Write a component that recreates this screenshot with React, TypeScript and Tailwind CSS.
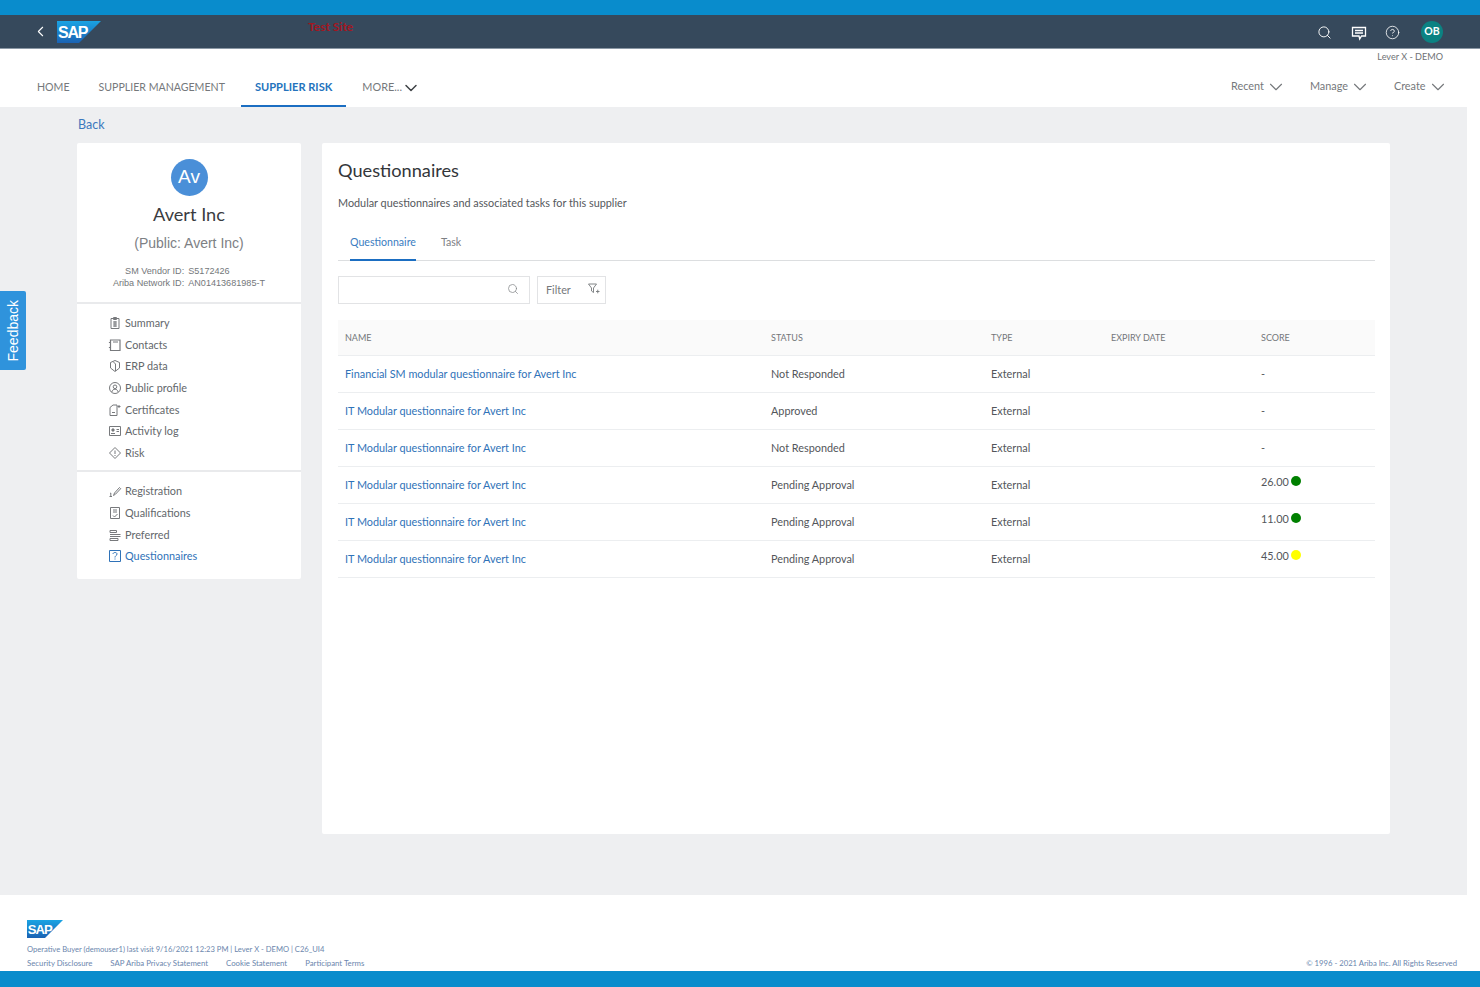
import { ChevronDown, ChevronLeft, CircleHelp, Search } from 'lucide-react'
import type { ReactNode } from 'react'

const rows = [
  { name: 'Financial SM modular questionnaire for Avert Inc', status: 'Not Responded', score: '-', dot: '' },
  { name: 'IT Modular questionnaire for Avert Inc', status: 'Approved', score: '-', dot: '' },
  { name: 'IT Modular questionnaire for Avert Inc', status: 'Not Responded', score: '-', dot: '' },
  { name: 'IT Modular questionnaire for Avert Inc', status: 'Pending Approval', score: '26.00', dot: 'bg-[#008000]' },
  { name: 'IT Modular questionnaire for Avert Inc', status: 'Pending Approval', score: '11.00', dot: 'bg-[#008000]' },
  { name: 'IT Modular questionnaire for Avert Inc', status: 'Pending Approval', score: '45.00', dot: 'bg-[#ffff00]' },
]

const Icon = ({ children, className = 'text-[#77797c]' }: { children: ReactNode; className?: string }) => (
  <svg viewBox="0 0 14 14" className={`h-3.5 w-3.5 shrink-0 ${className}`} fill="none" stroke="currentColor" strokeWidth="1">
    {children}
  </svg>
)

const navTop = [
  {
    label: 'Summary',
    icon: <path d="M3 2.500h8v10H3zM5.500 1.500h3v2h-3zM5 6h4M5 8h4M5 10h4M7 5v6" />,
  },
  {
    label: 'Contacts',
    icon: <path strokeWidth="1.200" d="M2.500 2h9.500v10.500H2.500zM5 4h5M1.500 4v1M1.500 9v1" />,
  },
  {
    label: 'ERP data',
    icon: <path d="M7 1.500l4.500 2v5.500L7 12.500 2.500 9V3.500zM5 2.500l2.500 2.500v7" />,
  },
  {
    label: 'Public profile',
    icon: (
      <>
        <circle cx="7" cy="7" r="5.500" />
        <circle cx="7" cy="5.800" r="1.800" />
        <path d="M3.800 11c.6-2 1.800-2.800 3.200-2.800s2.600.8 3.200 2.800" />
      </>
    ),
  },
  {
    label: 'Certificates',
    icon: <path d="M2 12.500V4.500L5 2h4v10.500zM4 9.500h3M11 2v3M9.500 3.500h3" />,
  },
  {
    label: 'Activity log',
    icon: (
      <>
        <path d="M1.500 2.500h11v9h-11z" />
        <circle cx="5" cy="6" r="1.200" fill="currentColor" />
        <path d="M3 9.500h4M8.500 5.500h2.500M8.500 7.500h2.500" />
      </>
    ),
  },
  {
    label: 'Risk',
    icon: <path d="M7 1.500L12.500 7 7 12.500 1.500 7zM7 4.500v3.500M7 9v1" />,
  },
]

const navBottom = [
  {
    label: 'Registration',
    icon: <path d="M2 9.500l.8-.5v3.500M1.500 12.500h2.500M5.500 11.500l1-2.500 5-5.500 1.200 1.200-5 5.300z" />,
  },
  {
    label: 'Qualifications',
    icon: <path d="M2.500 1.500h9v11h-9zM5 4h4M5 6h4M5 9.500l1.500 1.500L9.500 8" />,
  },
  {
    label: 'Preferred',
    icon: <path d="M2 2.500h6.500v2H2zM2 6.500h10.500M2 8.500h10.500M2 10.500h8v2H2z" />,
  },
]

function SapLogo({ className, id }: { className: string; id: string }) {
  return (
    <svg viewBox="0 0 44 22" className={className}>
      <defs>
        <linearGradient id={id} x1="0" y1="0" x2="0" y2="1">
          <stop offset="0" stopColor="#1aa3e3" />
          <stop offset="1" stopColor="#1a62b3" />
        </linearGradient>
      </defs>
      <polygon points="0,0 44,0 22,22 0,22" fill={`url(#${id})`} />
      <text
        x="1"
        y="16.500"
        fill="#fff"
        fontSize="16"
        fontWeight="700"
        fontFamily="'Liberation Sans', sans-serif"
        letterSpacing="-1.200"
      >
        SAP
      </text>
    </svg>
  )
}

function NavItem({ label, icon }: { label: string; icon: ReactNode }) {
  return (
    <div className="flex h-[21.6px] items-center gap-[3px] text-[#63676b]">
      <Icon>{icon}</Icon>
      <span>{label}</span>
    </div>
  )
}

export default function App() {
  return (
    <div className="relative flex min-h-[987px] flex-col bg-white font-['Lato',sans-serif] text-[10.85px] text-[#4a4d50]">
      <div className="h-[15px] bg-[#098ccc]" />

      {/* dark header */}
      <div className="flex h-[34px] items-center border-b border-[#8b98a5] bg-[#36495c] text-white">
        <ChevronLeft className="ml-[32px] h-[17px] w-[17px]" strokeWidth={1.500} />
        <SapLogo id="sap-top" className="ml-[8px] h-[22px] w-[44px]" />
        <span className="ml-[207px] -mt-[10px] text-[12px] font-bold text-[#a31621]">Test Site</span>
        <div className="ml-auto flex items-center pt-[1px]">
          <Search className="mt-[1px] h-[15px] w-[15px]" strokeWidth={1.500} />
          <svg viewBox="0 0 16 16" className="ml-[19px] mt-[1px] h-4 w-4" fill="none" stroke="currentColor" strokeWidth="1.300">
            <path d="M1.500 2.500h13v8.500h-4l-1.800 3-.7-3h-6.500zM4 5.500h8M4 8h8" />
          </svg>
          <CircleHelp className="ml-[18px] mt-[1px] h-[15px] w-[15px]" strokeWidth={1.300} />
          <div className="ml-[21px] mr-[37px] flex h-[22px] w-[22px] items-center justify-center rounded-full bg-[#0b8282] text-[10.500px] font-bold">
            OB
          </div>
        </div>
      </div>

      {/* nav */}
      <div className="relative flex h-[58px] items-end text-[#75787b]">
        <span className="absolute right-[37px] top-[1px] text-[9.1px] text-[#6f7275]">Lever X - DEMO</span>
        <div className="ml-[23px] flex h-full items-end text-[10.6px]">
          <div className="flex h-[37px] items-center px-[14px] pb-[2px]">HOME</div>
          <div className="ml-[1px] flex h-[37px] items-center px-[14px] pb-[2px]">SUPPLIER MANAGEMENT</div>
          <div className="ml-[2px] flex h-[37px] items-center border-b-2 border-[#1b6ec2] px-[14px] pb-[1px] text-[11.1px] font-bold text-[#2473bd]">
            SUPPLIER RISK
          </div>
          <div className="ml-[2px] flex h-[37px] items-center px-[14px] pb-[2px] text-[10.9px]">
            MORE...
            <ChevronDown className="-ml-[1px] h-[20px] w-[20px] text-[#3f4246]" strokeWidth={1.800} />
          </div>
        </div>
        <div className="ml-auto mr-[31.5px] flex h-[37px] items-center gap-[23px] pb-[4px]">
          <div className="flex items-center">
            Recent <ChevronDown className="ml-[1px] h-[22px] w-[22px]" strokeWidth={1.200} />
          </div>
          <div className="flex items-center">
            Manage <ChevronDown className="ml-[1px] h-[22px] w-[22px]" strokeWidth={1.200} />
          </div>
          <div className="flex items-center">
            Create <ChevronDown className="ml-[1px] h-[22px] w-[22px]" strokeWidth={1.200} />
          </div>
        </div>
      </div>

      {/* page body */}
      <div className="h-[788px] w-[1467px] bg-[#eeeff1] pl-[77px]">
        <div className="flex h-[36px] items-center pl-[1px] pt-[1px] text-[12.5px] text-[#3b78bd]">Back</div>
        <div className="flex items-start gap-[21px]">
          <aside className="h-[436px] w-[224px] rounded-[2px] bg-white">
            <div className="flex h-[161px] flex-col items-center border-b-2 border-[#e9eaec] pt-[16px]">
              <div className="flex h-[37px] w-[37px] items-center justify-center rounded-full bg-[#4a8fd8] font-['Liberation_Sans',sans-serif] text-[19px] text-white">
                Av
              </div>
              <div className="mt-[6px] text-[18.2px] leading-[24px] text-[#3a3c3f]">Avert Inc</div>
              <div className="mt-[7px] font-['Liberation_Sans',sans-serif] text-[14px] leading-[20px] text-[#7d8084]">(Public: Avert Inc)</div>
              <div className="mt-[11.5px] grid grid-cols-[auto_auto] gap-x-[4px] font-['Liberation_Sans',sans-serif] text-[9.1px] leading-[12px] text-[#74777a]">
                <span className="text-right">SM Vendor ID:</span>
                <span>S5172426</span>
                <span className="text-right">Ariba Network ID:</span>
                <span>AN01413681985-T</span>
              </div>
            </div>
            <div className="border-b-2 border-[#e9eaec] pb-[6.5px] pl-[31px] pt-[8.5px]">
              {navTop.map(item => (
                <NavItem key={item.label} label={item.label} icon={item.icon} />
              ))}
            </div>
            <div className="pl-[31px] pt-[8.5px]">
              {navBottom.map(item => (
                <NavItem key={item.label} label={item.label} icon={item.icon} />
              ))}
              <div className="flex h-[21.6px] items-center gap-[3px] text-[#2f72b8]">
                <Icon className="text-[#2f72b8]">
                  <path d="M1.500 1.500h11v11h-11zM5 5c0-2 4-2 4 0 0 1.500-2 1.500-2 3.500M7 9.500v1" />
                </Icon>
                <span>Questionnaires</span>
              </div>
            </div>
          </aside>

          <main className="h-[691px] w-[1068px] rounded-[2px] bg-white pl-[16px] pr-[15px]">
            <h1 className="pt-[14px] text-[18.2px] leading-[27px] text-[#33363a]">Questionnaires</h1>
            <p className="mt-[11px] leading-[16px] text-[#55585c]">Modular questionnaires and associated tasks for this supplier</p>

            <div className="mt-[14px] flex h-[36px] border-b border-[#dcdee0]">
              <div className="ml-[12px] flex h-[36px] items-center border-b-2 border-[#1b6ec2] pt-[1px] text-[10.6px] text-[#3a7cbf]">
                Questionnaire
              </div>
              <div className="ml-[25px] flex h-[35px] items-center text-[10.6px] text-[#7d8084]">Task</div>
            </div>

            <div className="mt-[15px] flex gap-[7px]">
              <div className="flex h-[28px] w-[192px] items-center justify-end border border-[#e2e3e5] pb-[3px] pr-[10px]">
                <Search className="h-[12px] w-[12px] text-[#85888b]" strokeWidth={1.500} />
              </div>
              <div className="flex h-[28px] w-[69px] items-center justify-between border border-[#e2e3e5] pl-[8px] pr-[5px] text-[#75787b]">
                Filter
                <svg viewBox="0 0 12 12" className="-mt-[3px] h-[12px] w-[12px]" fill="none" stroke="currentColor" strokeWidth="0.900">
                  <path d="M.500 1h8L5.500 5v4.500L3.500 8V5zM8 8.500h3.500M9.750 6.700v3.600" />
                </svg>
              </div>
            </div>

            <div className="mt-[16px]">
              <div className="grid h-[36px] grid-cols-[426px_220px_120px_150px_1fr] items-center border-b border-[#eceef0] bg-[#fafafa] text-[9px] text-[#74777a]">
                <span className="pl-[7px]">NAME</span>
                <span className="pl-[7px]">STATUS</span>
                <span className="pl-[7px]">TYPE</span>
                <span className="pl-[7px]">EXPIRY DATE</span>
                <span className="pl-[7px]">SCORE</span>
              </div>
              {rows.map((row, i) => (
                <div key={i} className="grid h-[37px] grid-cols-[426px_220px_120px_150px_1fr] items-center border-b border-[#eceef0] text-[#53565a]">
                  <span className="pl-[7px] text-[#2f72b8]">{row.name}</span>
                  <span className="pl-[7px]">{row.status}</span>
                  <span className="pl-[7px]">External</span>
                  <span />
                  <span className={`flex items-center gap-[2px] pl-[7px] ${row.dot ? '-mt-[6px]' : ''}`}>
                    {row.score}
                    {row.dot && <span className={`mb-[1px] h-[10px] w-[10px] rounded-full ${row.dot}`} />}
                  </span>
                </div>
              ))}
            </div>
          </main>
        </div>
      </div>

      {/* footer */}
      <footer className="flex h-[76px] flex-col px-[27px] text-[7.6px] text-[#6b86ad]">
        <SapLogo id="sap-foot" className="-ml-[1px] mt-[25px] h-[18px] w-[38px]" />
        <div className="mt-[6px] leading-[10px]">Operative Buyer (demouser1) last visit 9/16/2021 12:23 PM | Lever X - DEMO | C26_UI4</div>
        <div className="mt-[4px] flex justify-between leading-[10px]">
          <div className="flex gap-[18px] text-[7.8px]">
            <span>Security Disclosure</span>
            <span>SAP Ariba Privacy Statement</span>
            <span>Cookie Statement</span>
            <span>Participant Terms</span>
          </div>
          <span className="-mr-[4px] text-[7.7px]">© 1996 - 2021 Ariba Inc. All Rights Reserved</span>
        </div>
      </footer>
      <div className="h-[16px] bg-[#098ccc]" />

      {/* feedback tab sits over the page */}
      <div className="absolute left-0 top-[291px] flex h-[79px] w-[26px] items-center justify-center rounded-r-[2px] bg-[#2f93dc] font-['Liberation_Sans',sans-serif] text-[14px] text-white">
        <span className="rotate-180 [writing-mode:vertical-rl]">Feedback</span>
      </div>
    </div>
  )
}
